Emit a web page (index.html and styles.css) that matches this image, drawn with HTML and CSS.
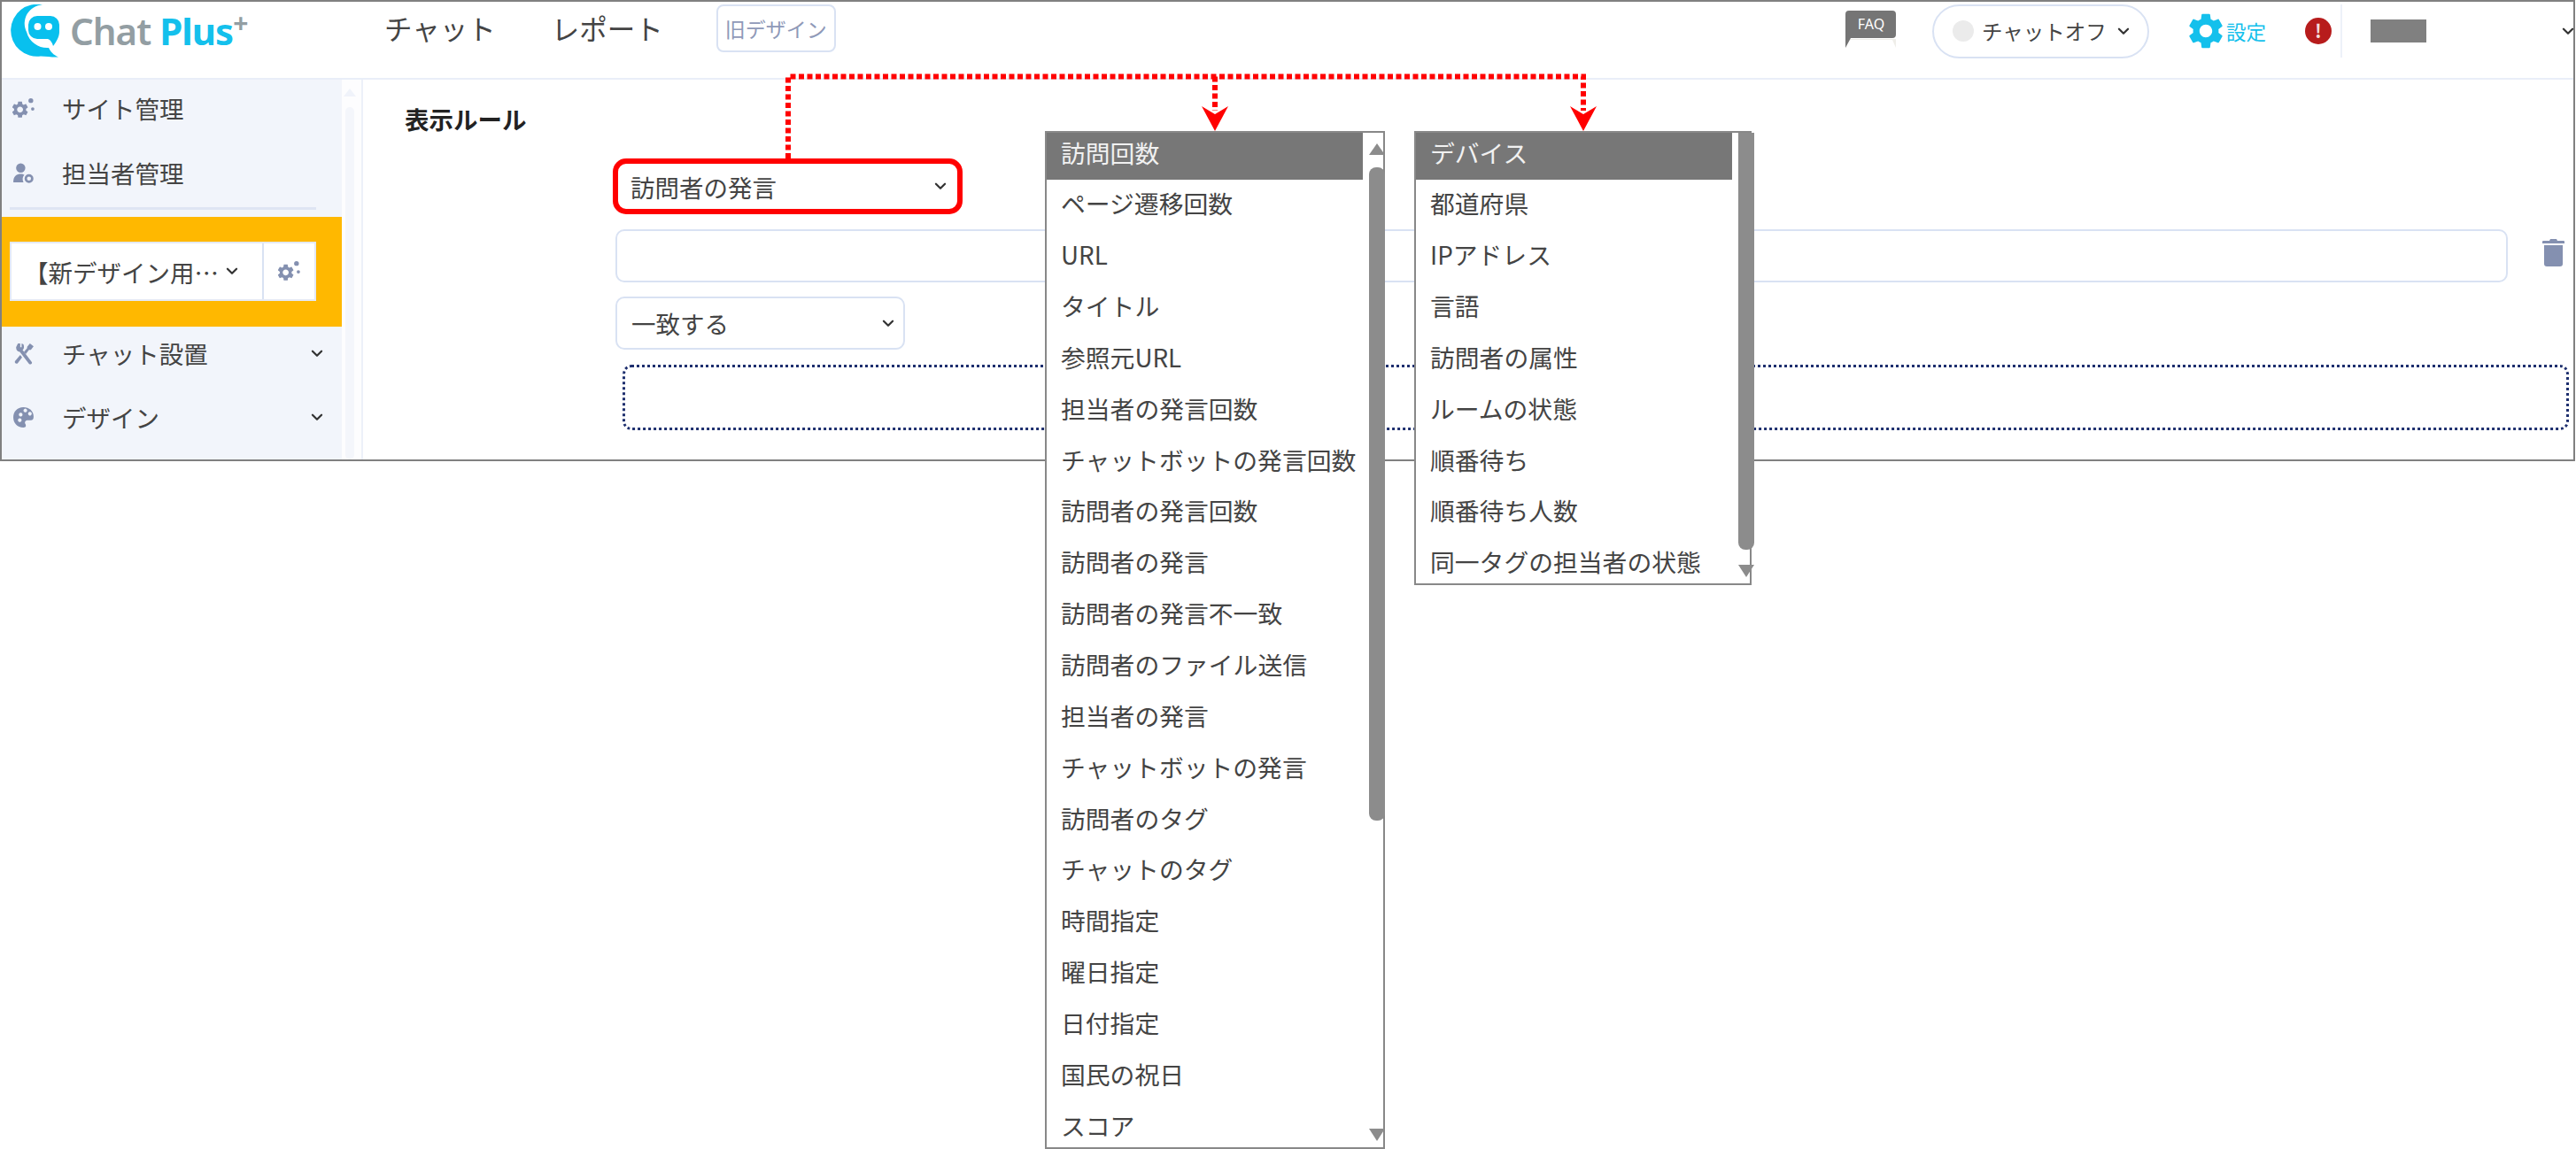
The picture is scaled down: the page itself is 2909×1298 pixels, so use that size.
FILE: index.html
```html
<!DOCTYPE html>
<html lang="ja">
<head>
    <meta charset="UTF-8">
    <title>Chat Plus 表示ルール</title>
    <link rel="stylesheet" href="styles.css">
</head>
<body>
    <svg class="icon-defs" width="0" height="0">
        <symbol id="gear" viewBox="0 0 24 24">
            <path d="M19.14 12.94c.04-.3.06-.61.06-.94 0-.32-.02-.64-.07-.94l2.03-1.58c.18-.14.23-.41.12-.61l-1.92-3.32c-.12-.22-.37-.29-.59-.22l-2.39.96c-.5-.38-1.03-.7-1.62-.94l-.36-2.54c-.04-.24-.24-.41-.48-.41h-3.84c-.24 0-.43.17-.47.41l-.36 2.54c-.59.24-1.13.57-1.62.94l-2.39-.96c-.22-.08-.47 0-.59.22L2.74 8.87c-.12.21-.08.47.12.61l2.03 1.58c-.05.3-.09.63-.09.94s.02.64.07.94l-2.03 1.58c-.18.14-.23.41-.12.61l1.92 3.32c.12.22.37.29.59.22l2.39-.96c.5.38 1.03.7 1.62.94l.36 2.54c.05.24.24.41.48.41h3.84c.24 0 .44-.17.47-.41l.36-2.54c.59-.24 1.13-.56 1.62-.94l2.39.96c.22.08.47 0 .59-.22l1.92-3.32c.12-.22.07-.47-.12-.61l-2.01-1.58zM12 15.6c-1.98 0-3.6-1.62-3.6-3.6s1.62-3.6 3.6-3.6 3.6 1.62 3.6 3.6-1.62 3.6-3.6 3.6z"/>
        </symbol>
        <symbol id="gears" viewBox="0 0 24 24">
            <path transform="translate(-2.500 2.500) scale(.9)" d="M19.14 12.94c.04-.3.06-.61.06-.94 0-.32-.02-.64-.07-.94l2.03-1.58c.18-.14.23-.41.12-.61l-1.92-3.32c-.12-.22-.37-.29-.59-.22l-2.39.96c-.5-.38-1.03-.7-1.62-.94l-.36-2.54c-.04-.24-.24-.41-.48-.41h-3.84c-.24 0-.43.17-.47.41l-.36 2.54c-.59.24-1.13.57-1.62.94l-2.39-.96c-.22-.08-.47 0-.59.22L2.74 8.87c-.12.21-.08.47.12.61l2.03 1.58c-.05.3-.09.63-.09.94s.02.64.07.94l-2.03 1.58c-.18.14-.23.41-.12.61l1.92 3.32c.12.22.37.29.59.22l2.39-.96c.5.38 1.03.7 1.62.94l.36 2.54c.05.24.24.41.48.41h3.84c.24 0 .44-.17.47-.41l.36-2.54c.59-.24 1.13-.56 1.62-.94l2.39.96c.22.08.47 0 .59-.22l1.92-3.32c.12-.22.07-.47-.12-.61l-2.01-1.58zM12 15.6c-1.98 0-3.6-1.62-3.6-3.6s1.62-3.6 3.6-3.6 3.6 1.62 3.6 3.6-1.62 3.6-3.6 3.6z"/>
            <circle cx="20" cy="3.500" r="2.600"/>
            <circle cx="22" cy="12.500" r="1.800"/>
        </symbol>
        <symbol id="chevron" viewBox="0 0 12 8">
            <path d="M1.500 1.500 6 6l4.500-4.500" fill="none" stroke="currentColor" stroke-width="2" stroke-linecap="round" stroke-linejoin="round"/>
        </symbol>
    </svg>

    <div class="page">
        <div class="frame">
            <header class="topbar">
                <svg class="logo-mark" viewBox="11 5 56 60" width="56" height="60">
                    <path d="M48 5.500A29.500 29.500 0 1 0 46 63.500C52 63.500 60 65 66 64.500 60 62 57 58 55 54A24 24 0 0 1 30 36 21 21 0 0 1 48 5.500Z" fill="#08c0ee"/>
                    <path d="M42 18H57A10 10 0 0 1 67 28V36C67 42 63 48 60 52 59 48 57 45 54 44H42A10 10 0 0 1 32 34V28A10 10 0 0 1 42 18Z" fill="#08c0ee"/>
                    <circle cx="42.500" cy="30" r="4" fill="#fff"/>
                    <circle cx="55" cy="30" r="4" fill="#fff"/>
                </svg>
                <div class="logo-text"><span class="logo-chat">Chat</span> <span class="logo-plus">Plus</span><span class="logo-sup">+</span></div>
                <nav class="topnav">
                    <a class="topnav-link">チャット</a>
                    <a class="topnav-link">レポート</a>
                    <button class="old-design">旧デザイン</button>
                </nav>
                <div class="topbar-right">
                    <svg class="faq-icon" viewBox="0 0 57 42" width="57" height="42">
                        <path d="M0 32 57 32 57 42 53 33 4 33 0 42Z" fill="#efeee9"/>
                        <path d="M4 0H53A4 4 0 0 1 57 4V27A4 4 0 0 1 53 31H6L0 42V4A4 4 0 0 1 4 0Z" fill="#757575"/>
                        <text x="29" y="21" class="faq-text">FAQ</text>
                    </svg>
                    <div class="chat-toggle">
                        <span class="chat-dot"></span>
                        <span class="chat-label">チャットオフ</span>
                        <svg class="chevron"><use href="#chevron"/></svg>
                    </div>
                    <div class="settings-link">
                        <svg class="settings-gear"><use href="#gear"/></svg>
                        <span>設定</span>
                    </div>
                    <div class="alert-dot">!</div>
                    <div class="topbar-divider"></div>
                    <div class="user-mask"></div>
                    <svg class="chevron user-chevron"><use href="#chevron"/></svg>
                </div>
            </header>

            <div class="main">
                <aside class="sidebar">
                    <div class="menu menu-top">
                        <div class="menu-item">
                            <svg class="menu-icon"><use href="#gears"/></svg>
                            <span>サイト管理</span>
                        </div>
                        <div class="menu-item">
                            <svg class="menu-icon" viewBox="0 0 24 24">
                                <circle cx="9" cy="6.500" r="5"/>
                                <path d="M1 22C1 15 5 13 9 13c2 0 3 .5 4 1-2 2-2.500 5-1 8Z"/>
                                <circle cx="18" cy="18" r="3.500" fill="none" stroke="currentColor" stroke-width="2.600"/>
                            </svg>
                            <span>担当者管理</span>
                        </div>
                    </div>
                    <div class="menu-rule"></div>
                    <div class="site-band">
                        <div class="site-select">
                            <div class="site-name">
                                <span>【新デザイン用…</span>
                                <svg class="chevron"><use href="#chevron"/></svg>
                            </div>
                            <div class="site-gear">
                                <svg class="menu-icon"><use href="#gears"/></svg>
                            </div>
                        </div>
                    </div>
                    <div class="menu menu-bottom">
                        <div class="menu-item">
                            <svg class="menu-icon" viewBox="0 0 24 24">
                                <path d="M6 1 8.500 1 8.500 5 10 5 10 1 12 2C13 5 12.500 7 11 8L21 21C22 23 19.500 24.500 18 23L8 10C5.500 10 4 8 4 5Z"/>
                                <path d="M19 1 23 4 20 8 18 8 14.500 12.500 12.500 10 16 6 16 4.500Z"/>
                                <path d="M8.500 13.500 10.500 16 6 22C4.500 24 1.500 22 3 20Z"/>
                            </svg>
                            <span>チャット設置</span>
                            <svg class="chevron menu-chevron"><use href="#chevron"/></svg>
                        </div>
                        <div class="menu-item">
                            <svg class="menu-icon" viewBox="0 0 24 24">
                                <path fill-rule="evenodd" d="M12 1C5 1 1 6 1 12s4 11 11 11c3 0 3-2 2-4-1-2 0-4 3-4h3c2 0 3-1 3-4C23 5 18 1 12 1ZM7 9a2 2 0 1 1 0 .01ZM12 4.500a2 2 0 1 1 0 .01ZM17 8a2 2 0 1 1 0 .01ZM6 15a2 2 0 1 1 0 .01Z"/>
                            </svg>
                            <span>デザイン</span>
                            <svg class="chevron menu-chevron"><use href="#chevron"/></svg>
                        </div>
                    </div>
                </aside>
                <div class="side-scroll">
                    <span class="side-scroll-up"></span>
                    <span class="side-scroll-thumb"></span>
                </div>

                <section class="content">
                    <h2 class="rule-title">表示ルール</h2>
                    <div class="rule-form">
                        <div class="select select-marked">
                            <span>訪問者の発言</span>
                            <svg class="chevron"><use href="#chevron"/></svg>
                        </div>
                        <div class="input-row">
                            <input class="text-input" type="text">
                            <svg class="trash-icon" viewBox="0 0 25 31" width="25" height="31">
                                <path d="M9 0H16L17 2H24A1 1 0 0 1 25 3V5H0V3A1 1 0 0 1 1 2H8Z"/>
                                <path d="M2 7H23V28A3 3 0 0 1 20 31H5A3 3 0 0 1 2 28Z"/>
                            </svg>
                        </div>
                        <div class="select select-match">
                            <span>一致する</span>
                            <svg class="chevron"><use href="#chevron"/></svg>
                        </div>
                        <div class="add-box"></div>
                    </div>
                </section>
            </div>
        </div>

        <!-- red call-out lines drawn over the screen -->
        <svg class="callout" width="2000" height="180" viewBox="0 0 2000 180">
            <path class="callout-line" d="M890 179V86.500H1788V125"/>
            <path class="callout-line" d="M1372 86.500V125"/>
            <path class="callout-head" d="M1372 148 1357 120 1372 129 1387 120Z"/>
            <path class="callout-head" d="M1788 148 1773 120 1788 129 1803 120Z"/>
        </svg>

        <div class="dropdown dropdown-left">
            <ul class="dropdown-list">
                <li class="selected">訪問回数</li>
                <li>ページ遷移回数</li>
                <li>URL</li>
                <li>タイトル</li>
                <li>参照元URL</li>
                <li>担当者の発言回数</li>
                <li>チャットボットの発言回数</li>
                <li>訪問者の発言回数</li>
                <li>訪問者の発言</li>
                <li>訪問者の発言不一致</li>
                <li>訪問者のファイル送信</li>
                <li>担当者の発言</li>
                <li>チャットボットの発言</li>
                <li>訪問者のタグ</li>
                <li>チャットのタグ</li>
                <li>時間指定</li>
                <li>曜日指定</li>
                <li>日付指定</li>
                <li>国民の祝日</li>
                <li>スコア</li>
            </ul>
            <div class="list-scroll">
                <span class="arrow-up"></span>
                <span class="list-thumb"></span>
                <span class="arrow-down"></span>
            </div>
        </div>

        <div class="dropdown dropdown-right">
            <ul class="dropdown-list">
                <li class="selected">デバイス</li>
                <li>都道府県</li>
                <li>IPアドレス</li>
                <li>言語</li>
                <li>訪問者の属性</li>
                <li>ルームの状態</li>
                <li>順番待ち</li>
                <li>順番待ち人数</li>
                <li>同一タグの担当者の状態</li>
            </ul>
            <div class="list-scroll">
                <span class="list-thumb"></span>
                <span class="arrow-down"></span>
            </div>
        </div>
    </div>
</body>
</html>
```

FILE: styles.css
```css
:root {
    --text-color: #444;
    --line-color: #d9e2f3;
    --side-color: #f2f5fb;
    --icon-color: #8490b0;
    --cyan: #14c0ec;
    --scroll-color: #8c8c8c;
}

* {
    box-sizing: border-box;
}

body {
    margin: 0;
    background: #fff;
    color: var(--text-color);
    font-family: "Noto Sans CJK JP", "Noto Sans", sans-serif;
    font-size: 27.500px;
    overflow: hidden;
}

.icon-defs {
    display: block;
    height: 0;
}

.page {
    position: relative;
    height: 1298px;
}

.frame {
    width: 2908px;
    height: 521px;
    border: 2px solid #808080;
    overflow: hidden;
    background: #fff;
}

/* Top bar */
.topbar {
    display: flex;
    align-items: center;
    height: 88px;
    padding: 0 0 20px 9px;
    border-bottom: 2px solid #e9eef8;
}

.logo-mark {
    flex: none;
}

.logo-text {
    width: 220px;
    margin-left: 12px;
    font-family: "Noto Sans", sans-serif;
    font-size: 42px;
    font-weight: 600;
    letter-spacing: -1px;
    line-height: 50px;
    white-space: nowrap;
}

.logo-chat {
    color: #939ea3;
}

.logo-plus {
    color: var(--cyan);
    font-weight: 700;
}

.logo-sup {
    position: relative;
    top: -14px;
    color: #939ea3;
    font-size: 30px;
    font-weight: 700;
    line-height: 0;
}

.topnav {
    display: flex;
    align-items: center;
    margin-left: 135px;
}

.topnav-link {
    margin-right: 63px;
    margin-top: -8px;
    font-size: 31.500px;
    line-height: 40px;
}

.old-design {
    width: 135px;
    height: 54px;
    margin-left: -3px;
    margin-top: -6px;
    padding: 0;
    border: 2px solid var(--line-color);
    border-radius: 8px;
    background: #fff;
    color: #8f99b8;
    font-family: inherit;
    font-size: 23px;
}

.topbar-right {
    display: flex;
    align-items: center;
    margin-left: auto;
}

.faq-icon {
    margin-right: 41px;
    margin-top: -4px;
}

.faq-text {
    fill: #fff;
    font-family: "Noto Sans", sans-serif;
    font-size: 16px;
    text-anchor: middle;
}

.chat-toggle {
    display: flex;
    align-items: center;
    width: 245px;
    height: 61px;
    padding-left: 21px;
    margin-right: 44px;
    border: 2px solid var(--line-color);
    border-radius: 31px;
}

.chat-dot {
    flex: none;
    width: 24px;
    height: 24px;
    margin-right: 9px;
    border-radius: 50%;
    background: #ebebeb;
}

.chat-label {
    margin-right: 12px;
    color: #444;
    font-size: 23.500px;
    white-space: nowrap;
}

.chevron {
    width: 14px;
    height: 9px;
    color: #333;
    flex: none;
}

.settings-link {
    display: flex;
    align-items: center;
    margin-right: 44px;
    color: var(--cyan);
    font-size: 22.500px;
}

.settings-gear {
    width: 48px;
    height: 48px;
    margin: 0 -1px 0 -4px;
    fill: var(--cyan);
}

.alert-dot {
    width: 30px;
    height: 30px;
    margin-right: 10px;
    border-radius: 50%;
    background: #b71c1c;
    color: #f3dcdc;
    font-size: 21px;
    font-weight: 700;
    line-height: 29px;
    text-align: center;
}

.topbar-divider {
    width: 2px;
    height: 60px;
    margin-right: 32px;
    background: #edf1f9;
}

.user-mask {
    width: 63px;
    height: 26px;
    background: #808080;
}

.user-chevron {
    margin-left: 153px;
    margin-right: -1px;
}

/* Sidebar */
.main {
    display: flex;
    height: 429px;
}

.sidebar {
    flex: none;
    width: 384px;
    padding-top: 3px;
    background: var(--side-color);
}

.menu {
    display: flex;
    flex-direction: column;
}

.menu-top {
    gap: 15px;
}

.menu-bottom {
    gap: 14px;
    margin-top: 1px;
}

.menu-item {
    display: flex;
    align-items: center;
    height: 58px;
    padding-left: 12px;
}

.menu-icon {
    flex: none;
    width: 25px;
    height: 25px;
    margin-right: 31px;
    color: var(--icon-color);
    fill: var(--icon-color);
}

.menu-chevron {
    margin-left: auto;
    margin-right: 21px;
}

.menu-rule {
    width: 346px;
    height: 3px;
    margin: 10px 0 8px 9px;
    background: #dfe5f3;
}

.site-band {
    height: 124px;
    padding: 28px 0 0 9px;
    background: #ffb800;
}

.site-select {
    display: flex;
    width: 346px;
    height: 67px;
    border: 2px solid #e4e9f4;
    background: #fff;
}

.site-name {
    flex: none;
    display: flex;
    align-items: center;
    width: 285px;
    padding-left: 14px;
    border-right: 2px solid var(--line-color);
    white-space: nowrap;
}

.site-name .chevron {
    margin-left: 8px;
}

.site-gear {
    display: flex;
    align-items: center;
    padding-left: 16px;
}

.site-gear .menu-icon {
    margin-right: 0;
}

.side-scroll {
    flex: none;
    display: flex;
    flex-direction: column;
    align-items: center;
    width: 24px;
    padding: 10px 4px 0 0;
    border-right: 2px solid #edf1f9;
    background: #fdfdfe;
}

.side-scroll-up {
    width: 0;
    height: 0;
    border: 7px solid transparent;
    border-top: 0;
    border-bottom: 9px solid #f0f3fa;
}

.side-scroll-thumb {
    flex: 1;
    width: 10px;
    margin-top: 12px;
    border-radius: 5px;
    background: #f4f6fb;
}

/* Rule form */
.content {
    flex: 1;
    min-width: 0;
    padding: 27px 0 0 47px;
}

.rule-title {
    margin: 0 0 28px;
    color: #222;
    font-size: 27.500px;
    font-weight: 700;
    line-height: 34px;
}

.rule-form {
    display: flex;
    flex-direction: column;
    gap: 16px;
    margin-left: 238px;
}

.select {
    display: flex;
    align-items: center;
    justify-content: space-between;
    height: 60px;
    border: 2px solid var(--line-color);
    border-radius: 10px;
    padding: 0 16px;
    background: #fff;
}

.select-marked {
    width: 395px;
    height: 63px;
    margin: 0 0 1px -3px;
    padding: 0 12px 0 14px;
    border: 6px solid #f00;
    border-radius: 15px;
}

.select-match {
    width: 327px;
    margin-bottom: 1px;
    padding-right: 10px;
}

.input-row {
    display: flex;
    align-items: flex-start;
}

.text-input {
    width: 2137px;
    height: 60px;
    border: 2px solid var(--line-color);
    border-radius: 10px;
    background: #fff;
}

.trash-icon {
    margin: 11px 0 0 39px;
    fill: var(--icon-color);
}

.add-box {
    width: 2198px;
    height: 74px;
    margin-left: 8px;
    border: 3px dotted #1e2f6e;
    border-radius: 10px;
}

/* Call-out lines over the screen */
.callout {
    position: absolute;
    top: 0;
    left: 0;
}

.callout-line {
    fill: none;
    stroke: #f00;
    stroke-width: 6;
    stroke-dasharray: 6 3.500;
}

.callout-head {
    fill: #f00;
}

/* Open dropdown lists */
.dropdown {
    position: absolute;
    top: 148px;
    display: flex;
    border: 2px solid #888;
    background: #fff;
}

.dropdown-left {
    left: 1180px;
    width: 384px;
    height: 1150px;
}

.dropdown-right {
    left: 1597px;
    width: 381px;
    height: 513px;
}

.dropdown-list {
    flex: none;
    width: 357px;
    margin: 0;
    padding: 0;
    list-style: none;
    font-size: 27.800px;
    white-space: nowrap;
}

.dropdown-list li {
    display: flex;
    align-items: center;
    height: 57.850px;
    padding: 0 0 5px 16px;
}

.dropdown-list .selected {
    height: 53px;
    padding-bottom: 10px;
    background: #777;
    color: #f1f1f1;
}

.list-scroll {
    display: flex;
    flex-direction: column;
    align-items: center;
    flex: 1;
    margin-left: 7px;
    margin-right: 1px;
}

.list-thumb {
    width: 100%;
    border-radius: 0 0 8px 8px;
    background: var(--scroll-color);
}

.dropdown-left .list-thumb {
    height: 738px;
    margin-top: 14px;
    border-radius: 8px;
}

.dropdown-right .list-thumb {
    height: 471px;
}

.arrow-up {
    width: 0;
    height: 0;
    margin-top: 12px;
    border: 9px solid transparent;
    border-top: 0;
    border-bottom: 13px solid var(--scroll-color);
}

.arrow-down {
    width: 0;
    height: 0;
    margin-top: auto;
    margin-bottom: 7px;
    border: 9px solid transparent;
    border-bottom: 0;
    border-top: 14px solid var(--scroll-color);
}
```
